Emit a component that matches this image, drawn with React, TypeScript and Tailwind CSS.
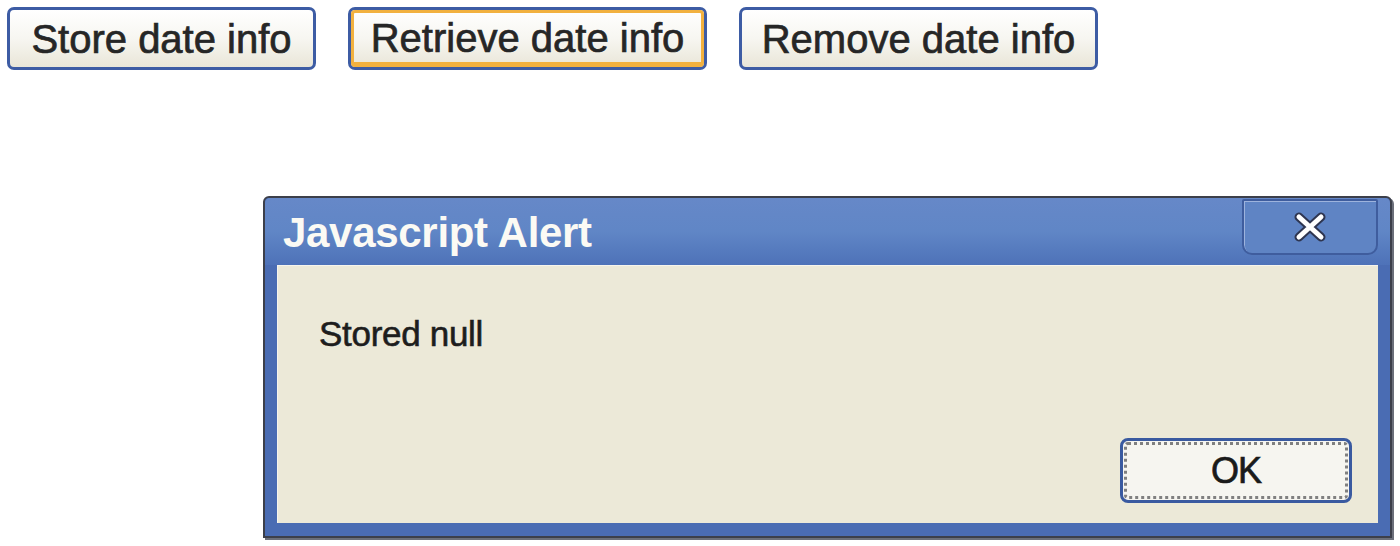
import React from "react";

const btnFont = { fontFamily: '"Liberation Sans", Arial, sans-serif' };

function XPButton({ label, w, focused }: { label: string; w: string; focused?: boolean }) {
  return (
    <div
      className={`${w} h-[63px] rounded-[7px] border-[3px] border-[#3d5ca4] bg-gradient-to-b from-[#ffffff] via-[#f7f6f1] to-[#e9e6d8] flex`}
    >
      <div
        className={`flex-1 rounded-[4px] flex items-center justify-center text-[40px] text-[#262626] leading-none [-webkit-text-stroke:0.7px_#262626] ${
          focused ? "border-[3px] border-b-[5px] border-[#f2b13f]" : "border-[3px] border-transparent"
        }`}
        style={btnFont}
      >
        <span className="mt-[1px]">{label}</span>
      </div>
    </div>
  );
}

export default function App() {
  return (
    <div className="w-[1400px] h-[546px] bg-white overflow-hidden relative" style={btnFont}>
      <div className="flex gap-[32px] pl-[7px] pt-[7px]">
        <XPButton label="Store date info" w="w-[309px]" />
        <XPButton label="Retrieve date info" w="w-[359px]" focused />
        <XPButton label="Remove date info" w="w-[359px]" />
      </div>

      <div className="ml-[263px] mt-[126px] w-[1129px] h-[342px] rounded-t-[6px] border-[2px] border-[#3c3f4a] bg-[#4a6cb3] flex flex-col shadow-[2px_2px_0_#6b6f7a]">
        {/* title bar */}
        <div className="h-[67px] shrink-0 rounded-t-[5px] bg-gradient-to-b from-[#6688c8] via-[#6086c6] to-[#4e72b8] flex items-center justify-between pl-[18px] pr-[12px]">
          <span className="text-[42px] font-bold text-[#fbfaf4] leading-none tracking-[-0.3px] mt-[2px]">
            Javascript Alert
          </span>
          <div className="w-[136px] h-[56px] -mt-[10px] rounded-b-[10px] rounded-t-[2px] border-[2px] border-[#3f5d9e] bg-[#5f84c4] shadow-[inset_1px_1px_0_#9db3dd] flex items-center justify-center">
            <svg width="38" height="32" viewBox="0 0 38 32">
              <path d="M8 6 L30 26 M30 6 L8 26" stroke="#2e3550" strokeWidth="9" strokeLinecap="round" />
              <path d="M8 6 L30 26 M30 6 L8 26" stroke="#ffffff" strokeWidth="5" strokeLinecap="round" />
            </svg>
          </div>
        </div>
        {/* body */}
        <div className="flex-1 mx-[12px] mb-[13px] bg-[#ece9d8] border-t border-l border-[#f6f4ec] flex flex-col">
          <div className="pl-[41px] pt-[50px] text-[35px] text-[#1d1d1d] leading-none tracking-[-0.3px] [-webkit-text-stroke:0.6px_#1d1d1d]">
            Stored null
          </div>
          <div className="flex-1" />
          <div className="flex justify-end pr-[26px] pb-[20px]">
            <div className="w-[232px] h-[65px] rounded-[8px] border-[3px] border-[#3a5aa0] bg-[#f6f5f0] p-[1px] flex">
              <div className="flex-1 border-[3px] border-dotted border-[#808080] rounded-[4px] flex items-center justify-center text-[36px] text-[#1a1a1a] leading-none tracking-[-1px] [-webkit-text-stroke:0.7px_#1a1a1a]">
                OK
              </div>
            </div>
          </div>
        </div>
      </div>
    </div>
  );
}
